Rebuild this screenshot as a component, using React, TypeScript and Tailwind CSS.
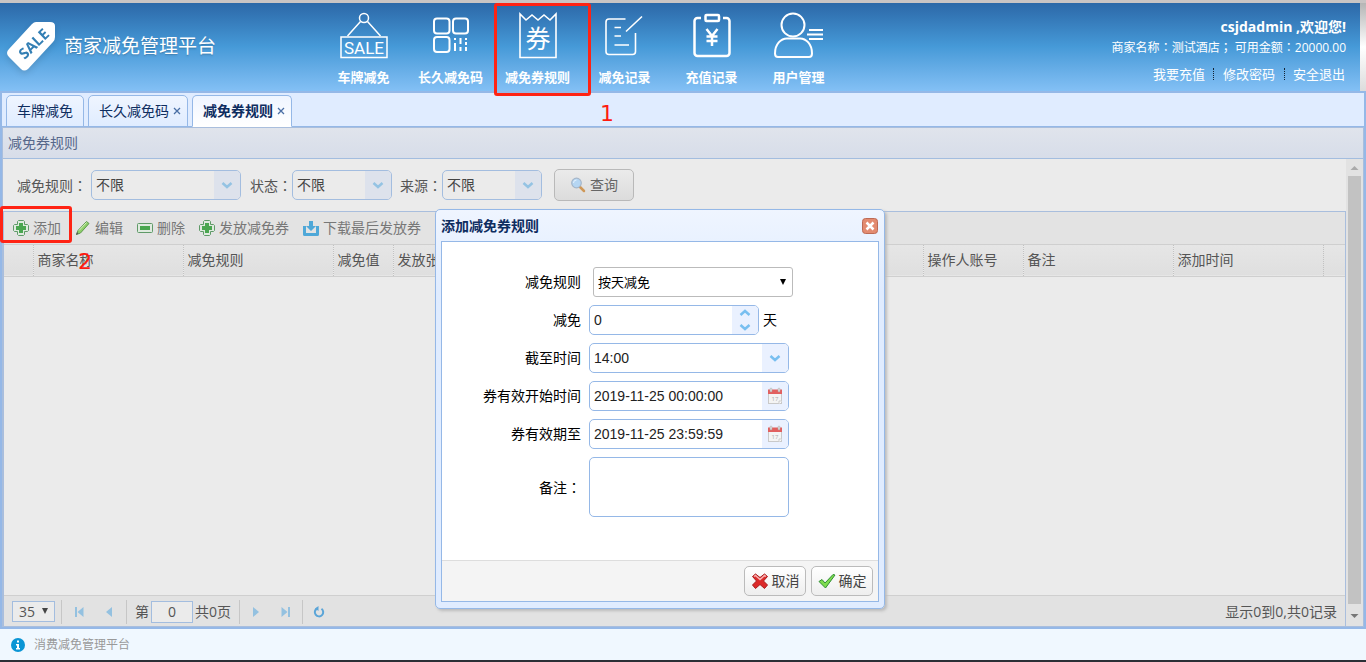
import { useState } from "react";
import type { ReactNode } from "react";

const NAV_ITEMS = [
  { id: "plate", label: "车牌减免" },
  { id: "code", label: "长久减免码" },
  { id: "rule", label: "减免券规则" },
  { id: "record", label: "减免记录" },
  { id: "recharge", label: "充值记录" },
  { id: "user", label: "用户管理" },
];

const TABS = [
  { label: "车牌减免", closable: false },
  { label: "长久减免码", closable: true },
  { label: "减免券规则", closable: true },
];

const COLUMNS = [
  { label: "", width: "w-[29px]" },
  { label: "商家名称", width: "w-[150px]" },
  { label: "减免规则", width: "w-[150px]" },
  { label: "减免值", width: "w-[60px]" },
  { label: "发放张数", width: "w-[530px]" },
  { label: "操作人账号", width: "w-[100px]" },
  { label: "备注", width: "w-[150px]" },
  { label: "添加时间", width: "w-[150px]" },
];

const NavIcon = ({ id }: { id: string }) => (
  <svg width="60" height="52" viewBox="0 0 60 52" fill="none" stroke="#fff" strokeWidth="2" aria-hidden="true">
    {id === "plate" && (
      <>
        <circle cx="30" cy="7" r="4.5" strokeWidth="1.5" />
        <path d="M13.5 25 26.5 10.5M46.5 25 33.5 10.5" strokeWidth="1.5" />
        <rect x="7" y="26" width="46" height="20.5" strokeWidth="1.5" />
        <text
          x="30"
          y="43"
          textAnchor="middle"
          fontSize="17"
          fontWeight="normal"
          fill="#fff"
          stroke="none"
          className="font-[Roboto]"
        >
          SALE
        </text>
      </>
    )}
    {id === "code" && (
      <>
        <rect x="13" y="7.5" width="15.5" height="15" rx="3" />
        <rect x="32" y="7.5" width="15" height="15" rx="3" />
        <rect x="13" y="26" width="15.5" height="15" rx="3" />
        <path d="M34 27v2M34 32v8M39.5 27v6M39.5 36v4M45 27v2M45 31v3M45 36v4" />
      </>
    )}
    {id === "rule" && (
      <>
        <path d="M12 3v43.5h36V3l-6 6-6-5-6 5-6-5-6 5z" strokeWidth="1.6" />
        <text x="30" y="37" textAnchor="middle" fontSize="25" fontWeight="normal" fill="#fff" stroke="none">
          券
        </text>
      </>
    )}
    {id === "record" && (
      <>
        <path d="M30.5 8H14a3 3 0 0 0-3 3v29.5a3 3 0 0 0 3 3h23.500a3 3 0 0 0 3-3V22" strokeWidth="1.6" />
        <path d="M31 20.5 47 5.500M19.500 16.500H26M19.500 25H26M19.500 34H34" strokeWidth="1.6" />
      </>
    )}
    {id === "recharge" && (
      <>
        <path
          d="M19 7h-3.500a3 3 0 0 0-3 3v32a3 3 0 0 0 3 3h29a3 3 0 0 0 3-3V10a3 3 0 0 0-3-3H41"
          strokeWidth="2.5"
        />
        <rect x="23.5" y="4" width="13.5" height="6" rx="1" strokeWidth="2.5" />
        <path d="m24.500 18 5.500 7 5.500-7M30 25v10M24.500 25.500h11M24.500 30h11" strokeWidth="2.5" />
      </>
    )}
    {id === "user" && (
      <>
        <circle cx="24" cy="14" r="11.5" />
        <path d="M6 42.500C6 33 12 27.500 18 27.500h13c6 0 12 5.500 12 15 0 2-1 3.500-3 3.500H9c-2 0-3-1.500-3-3.500z" />
        <path d="M40 19h14M38 23.500h16M40 28h14" />
      </>
    )}
  </svg>
);

const AddIcon = () => (
  <svg width="16" height="16" viewBox="0 0 16 16" aria-hidden="true">
    <path
      d="M5.500.500h5l1 1v3h3l1 1v5l-1 1h-3v3l-1 1h-5l-1-1v-3h-3l-1-1v-5l1-1h3v-3z"
      fill="#dfeadf"
      stroke="#5f9a68"
    />
    <path d="M6 3h4v3h3v4h-3v3H6v-3H3V6h3z" fill="#4aa650" />
  </svg>
);

const PencilIcon = () => (
  <svg width="16" height="16" viewBox="0 0 16 16" aria-hidden="true">
    <path d="m1.500 14.500 1.500-4 8.500-9 2.500 2-8.500 9.500z" fill="#8fcf6b" stroke="#5d9a4d" />
    <path d="m4 10.500 7.500-8" stroke="#d5efbd" />
    <path d="m1 15 1-3 1.500 1.500z" fill="#555" />
  </svg>
);

const RemoveIcon = () => (
  <svg width="16" height="16" viewBox="0 0 16 16" aria-hidden="true">
    <rect x=".5" y="3.5" width="15" height="9" rx="1" fill="#dfeadf" stroke="#5f9a68" />
    <rect x="3" y="6" width="10" height="4" fill="#4aa650" />
  </svg>
);

const DownloadIcon = () => (
  <svg width="16" height="16" viewBox="0 0 16 16" fill="#4fa8d8" aria-hidden="true">
    <path d="M0 6h3v7h10V6h3v8.500q0 1.500-1.500 1.500h-13Q0 16 0 14.500z" />
    <path d="M6 1h4v5h3l-5 5-5-5h3z" />
  </svg>
);

const SearchIcon = () => (
  <svg width="16" height="16" viewBox="0 0 16 16" aria-hidden="true">
    <path d="m9.500 9.500 4.500 4.500" stroke="#cf9858" strokeWidth="2.5" strokeLinecap="round" />
    <circle cx="6.5" cy="6" r="4.8" fill="#b5d6f3" stroke="#a5b6c9" strokeWidth="1.2" />
    <path d="M3.500 6a3 3 0 0 1 3-3" fill="none" stroke="#e6f3ff" />
  </svg>
);

const CalendarIcon = () => (
  <svg width="16" height="18" viewBox="0 0 16 18" aria-hidden="true">
    <rect x="1.5" y="3.5" width="13" height="13" fill="#f4f4f4" stroke="#c9c9c9" />
    <path d="M1 2.500h14V7H1z" fill="#e2605f" />
    <rect x="3" y="1" width="2" height="4" rx="1" fill="#ddd" stroke="#aaa" strokeWidth=".5" />
    <rect x="11" y="1" width="2" height="4" rx="1" fill="#ddd" stroke="#aaa" strokeWidth=".5" />
    <text x="8" y="14" textAnchor="middle" fontSize="6" fill="#aaa">
      17
    </text>
    <path d="M12 17v-3h3" fill="#fff" stroke="#ccc" />
  </svg>
);

const CancelIcon = () => (
  <svg width="18" height="16" viewBox="0 0 18 16" aria-hidden="true">
    <path
      d="m1.500 3.500 3-2.500L9 4.500 13.500 1l3 2.500L12.500 8l4 4-3 3.500L9 11.500l-4.500 4-3-3.500 4-4z"
      fill="#dc2a2a"
      stroke="#a81c1c"
      strokeLinejoin="round"
    />
    <path d="m3 3.500 1.500-1L9 6.500l4.500-4 1.500 1" fill="none" stroke="#f9b3b3" strokeWidth="1.5" />
  </svg>
);

const OkIcon = () => (
  <svg width="18" height="16" viewBox="0 0 18 16" aria-hidden="true">
    <path d="m1 8.500 3-2 3 3.500L15 1.500l2 .5L7.500 15z" fill="#7edb4e" stroke="#2f8f35" strokeLinejoin="round" />
  </svg>
);

const Chevron = ({ up = false }: { up?: boolean }) => (
  <svg width="12" height="8" viewBox="0 0 12 8" fill="none" strokeWidth="2.5" aria-hidden="true">
    <path d={up ? "M1.500 6 6 2l4.500 4" : "M1.500 2 6 6l4.500-4"} stroke="currentColor" />
  </svg>
);

// The SC face sets full-width punctuation at the left, the TC one centres it
const Mark = ({ children }: { children: string }) => <span className="font-['Noto_Sans_CJK_TC']">{children}</span>;

const FilterSelect = ({ id, label, width }: { id: string; label: string; width: string }) => (
  <>
    <label htmlFor={id}>
      {label}
      <Mark>：</Mark>
    </label>
    <div className={`relative h-[30px] overflow-hidden rounded-[5px] border border-[#a3bddf] ${width}`}>
      <select id={id} className="h-full w-full appearance-none bg-transparent px-1 text-sm text-[#444] outline-none">
        <option>不限</option>
      </select>
      <span className="pointer-events-none absolute inset-y-0 right-0 flex w-[26px] items-center justify-center bg-[#dde2ec] text-[#94c3e3]">
        <Chevron />
      </span>
    </div>
  </>
);

const ToolButton = ({ icon, label, onClick }: { icon: ReactNode; label: string; onClick?: () => void }) => (
  <button type="button" className="flex items-center gap-1 text-[#777]" onClick={onClick}>
    {icon}
    {label}
  </button>
);

const PageButton = ({ label, path }: { label: string; path: string }) => (
  <button type="button" aria-label={label} className="flex w-[30px] justify-center text-[#94c1e0]">
    <svg width="12" height="12" viewBox="0 0 12 12" fill="currentColor" aria-hidden="true">
      <path d={path} />
    </svg>
  </button>
);

const Separator = () => <span className="h-6 w-px bg-[#c6c6c6]" />;

const FormRow = ({ id, label, children }: { id: string; label: ReactNode; children: ReactNode }) => (
  <div className="flex items-center gap-2">
    <label htmlFor={id} className="w-[139px] text-right">
      {label}
    </label>
    {children}
  </div>
);

const FIELD = "flex h-[30px] overflow-hidden rounded-[5px] border border-[#95b8e7] bg-white";
const FIELD_INPUT = "min-w-0 flex-1 px-1 font-[Liberation_Sans] text-sm text-[#222] outline-none";
const FIELD_ADDON = "flex w-[26px] flex-col items-center justify-center bg-[#eaf1ff] text-[#78bff0]";
const DIALOG_BUTTON =
  "flex h-[30px] w-[62px] items-center justify-center gap-[3px] rounded-[5px] border border-[#bbb] bg-linear-to-b from-white to-[#eee] text-[#444]";

const RuleDialog = ({ onClose }: { onClose: () => void }) => {
  const [amount, setAmount] = useState("0");
  const [start, setStart] = useState("2019-11-25 00:00:00");
  const [end, setEnd] = useState("2019-11-25 23:59:59");

  return (
    <div
      role="dialog"
      aria-label="添加减免券规则"
      className="absolute top-[209px] left-[435px] w-[450px] rounded-[5px] border border-[#95b8e7] bg-linear-to-b from-[#eff5ff] to-[#e0ecff] to-20% px-[5px] pb-[6px] shadow-[2px_2px_3px_#bbb]"
    >
      <div className="flex h-[31px] items-center justify-between pr-px">
        <h2 className="font-bold text-[#0e2d5f]">添加减免券规则</h2>
        <button type="button" aria-label="关闭" onClick={onClose}>
          <svg width="16" height="16" viewBox="0 0 16 16">
            <rect x=".5" y=".5" width="15" height="15" rx="3" fill="#e38b70" stroke="#bd6a54" />
            <path d="m4.500 4.500 7 7m0-7-7 7" stroke="#fff" strokeWidth="2.5" />
          </svg>
        </button>
      </div>

      <form className="border border-[#95b8e7] bg-white text-black" onSubmit={(e) => e.preventDefault()}>
        <div className="flex flex-col gap-2 pt-[25px] pb-[43px]">
          <FormRow id="type" label="减免规则">
            <div className="relative ml-1 h-[30px] w-[200px] rounded-[3px] border border-[#bbb]">
              <select id="type" className="h-full w-full appearance-none px-1 text-[13px] outline-none">
                <option>按天减免</option>
              </select>
              <svg
                width="8"
                height="8"
                viewBox="0 0 8 8"
                className="pointer-events-none absolute top-[10px] right-[5px]"
                aria-hidden="true"
              >
                <path d="M1 1h6L4 7z" />
              </svg>
            </div>
          </FormRow>
          <FormRow id="amount" label="减免">
            <div className="flex items-center gap-1">
              <div className={`${FIELD} w-[170px]`}>
                <input id="amount" className={FIELD_INPUT} value={amount} onChange={(e) => setAmount(e.target.value)} />
                <span className={`${FIELD_ADDON} gap-[6px]`}>
                  <Chevron up />
                  <Chevron />
                </span>
              </div>
              天
            </div>
          </FormRow>
          <FormRow id="until" label="截至时间">
            <div className={`${FIELD} relative w-[200px]`}>
              <select
                id="until"
                className="w-full appearance-none px-1 font-[Liberation_Sans] text-sm text-[#222] outline-none"
              >
                <option>14:00</option>
              </select>
              <span className={`${FIELD_ADDON} pointer-events-none absolute inset-y-0 right-0`}>
                <Chevron />
              </span>
            </div>
          </FormRow>
          <FormRow id="start" label="券有效开始时间">
            <div className={`${FIELD} w-[200px]`}>
              <input id="start" className={FIELD_INPUT} value={start} onChange={(e) => setStart(e.target.value)} />
              <span className={FIELD_ADDON}>
                <CalendarIcon />
              </span>
            </div>
          </FormRow>
          <FormRow id="end" label="券有效期至">
            <div className={`${FIELD} w-[200px]`}>
              <input id="end" className={FIELD_INPUT} value={end} onChange={(e) => setEnd(e.target.value)} />
              <span className={FIELD_ADDON}>
                <CalendarIcon />
              </span>
            </div>
          </FormRow>
          <FormRow
            id="remark"
            label={
              <>
                备注<Mark>：</Mark>
              </>
            }
          >
            <textarea
              id="remark"
              className="h-[60px] w-[200px] resize-none rounded-[5px] border border-[#95b8e7] p-1 outline-none"
            />
          </FormRow>
        </div>

        <div className="flex justify-end gap-[5px] border-t border-[#ddd] bg-[#f4f4f4] p-[5px]">
          <button type="button" className={DIALOG_BUTTON} onClick={onClose}>
            <CancelIcon />
            取消
          </button>
          <button type="submit" className={DIALOG_BUTTON}>
            <OkIcon />
            确定
          </button>
        </div>
      </form>
    </div>
  );
};

const Header = () => (
  <header className="flex border-t-3 border-[#c9c4c4] bg-linear-to-b from-[#b5b5b5] via-white to-[#dcdcdc] pr-[6px]">
    <div className="flex h-[88px] flex-1 bg-linear-to-b from-[#2c68a8] via-[#469ad8] to-[#83c0f5] pr-[14px] text-white">
      <div className="flex w-80 items-center pl-1">
        <svg width="60" height="60" viewBox="0 0 60 60" className="drop-shadow-md" aria-hidden="true">
          <path
            d="M32 5h14q5 0 5 4v11q0 3-2 5L24 52q-4 3-7 0L5 40q-4-4 0-8L28 7q2-2 4-2z"
            fill="#fff"
          />
          <text
            y="5"
            textAnchor="middle"
            fontSize="15"
            fontWeight="bold"
            fill="#337fb4"
            transform="translate(30 27) rotate(-44)"
            className="font-[Open_Sans]"
          >
            SALE
          </text>
        </svg>
        <h1 className="text-[19px] text-shadow-sm">商家减免管理平台</h1>
      </div>

      <nav className="flex">
        {NAV_ITEMS.map(({ id, label }) => (
          <a
            key={id}
            href={`#${id}`}
            className="relative flex w-[87px] flex-col items-center pt-2 text-[13px] leading-5 font-bold"
          >
            <NavIcon id={id} />
            <span className="mt-1">{label}</span>
            {id === "rule" && (
              <>
                <span className="absolute top-0 left-0 h-[93px] w-[97px] rounded-[3px] border-3 border-[#ff2314]" />
                <span className="absolute top-[101px] left-[106px] font-[DejaVu_Sans] text-[22px] leading-5 font-normal text-[#ff1a10]">
                  1
                </span>
              </>
            )}
          </a>
        ))}
      </nav>

      <div className="ml-auto flex flex-col items-end pt-[14px] whitespace-nowrap">
        <p className="text-sm leading-5 font-bold">csjdadmin ,欢迎您!</p>
        <p className="text-xs leading-5">
          商家名称<Mark>：</Mark>测试酒店<Mark>；</Mark> 可用金额<Mark>：</Mark>20000.00
        </p>
        <ul className="flex items-center pt-[6px] pr-px text-[13px] leading-5">
          <li className="pr-2">
            <a href="#recharge">我要充值</a>
          </li>
          <li className="flex items-center">
            <span className="h-3 border-l border-dotted border-[#123]" />
            <a href="#password" className="px-[9px]">
              修改密码
            </a>
            <span className="h-3 border-l border-dotted border-[#123]" />
          </li>
          <li className="pl-2">
            <a href="#logout">安全退出</a>
          </li>
        </ul>
      </div>
    </div>
  </header>
);

export default function App() {
  const [activeTab, setActiveTab] = useState(2);
  const [dialogOpen, setDialogOpen] = useState(true);
  const [page, setPage] = useState("0");

  return (
    <div className="relative flex min-h-screen flex-col bg-white font-['Open_Sans','Noto_Sans_CJK_SC',sans-serif] text-sm">
      <Header />

      <main className="flex flex-1 flex-col border-2 border-[#95b8e7] bg-[#e0ecff]">
        <div className="flex h-[34px] items-end gap-1 border-b border-[#95b8e7] pl-1">
          {TABS.map((tab, i) => (
            <div
              key={tab.label}
              className={`-mb-px flex h-8 items-center gap-1 rounded-t-[5px] border border-[#95b8e7] text-[#0e2d5f] ${
                tab.closable ? "pr-[6px] pl-[10px]" : "px-[10px]"
              } ${
                i === activeTab
                  ? "border-b-white bg-linear-to-b from-[#eff5ff] to-white font-bold"
                  : "bg-linear-to-b from-[#eff5ff] to-[#e0ecff]"
              }`}
            >
              <button type="button" onClick={() => setActiveTab(i)}>
                {tab.label}
              </button>
              {tab.closable && (
                <button type="button" aria-label="关闭标签" className="text-[#4a6fa5]">
                  <svg width="8" height="8" viewBox="0 0 8 8" stroke="currentColor" strokeWidth="1.3" aria-hidden="true">
                    <path d="m1 1 6 6m0-6L1 7" />
                  </svg>
                </button>
              )}
            </div>
          ))}
        </div>

        <section className="flex flex-1 flex-col border border-[#a9bedd] bg-[#ebebeb]">
          <h2 className="flex h-[31px] items-center border-b border-[#a3bddf] bg-linear-to-b from-[#e0e4ec] to-[#d7dde9] pl-[5px] text-[#56678a]">
            减免券规则
          </h2>

          <div className="flex flex-1">
            <div className="flex flex-1 flex-col">
              <form className="flex h-[52px] items-center text-[#555]" onSubmit={(e) => e.preventDefault()}>
                <div className="flex items-center gap-1 pl-[14px]">
                  <FilterSelect id="rule-filter" label="减免规则" width="w-[150px]" />
                </div>
                <div className="flex items-center pl-[9px]">
                  <FilterSelect id="state-filter" label="状态" width="w-[100px]" />
                </div>
                <div className="flex items-center pl-2">
                  <FilterSelect id="source-filter" label="来源" width="w-[100px]" />
                </div>
                <button
                  type="submit"
                  className="ml-3 flex h-8 w-20 items-center justify-center gap-1 rounded-[5px] border border-[#b9b9b9] bg-linear-to-b from-[#ebebeb] to-[#dcdcdc] text-[#666]"
                >
                  <SearchIcon />
                  查询
                </button>
              </form>

              <div className="flex flex-1 flex-col border border-b-0 border-[#a9bedd]">
                <div className="relative flex h-[33px] items-center gap-[14px] border-b border-[#cfcfcf] bg-[#e3e3e3] pl-[9px]">
                  <ToolButton icon={<AddIcon />} label="添加" onClick={() => setDialogOpen(true)} />
                  <ToolButton icon={<PencilIcon />} label="编辑" />
                  <ToolButton icon={<RemoveIcon />} label="删除" />
                  <ToolButton icon={<AddIcon />} label="发放减免券" />
                  <ToolButton icon={<DownloadIcon />} label="下载最后发放券" />
                  <span className="absolute -top-[6px] -left-1 h-[37px] w-[72px] rounded-[3px] border-3 border-[#ff2314]" />
                  <span className="absolute top-10 left-[74px] font-[DejaVu_Sans] text-[22px] leading-5 text-[#ff1a10]">
                    2
                  </span>
                </div>

                <table className="w-full table-fixed">
                  <thead>
                    <tr className="h-[31px] border-b border-[#cfcfcf] bg-linear-to-b from-[#e6e6e6] to-[#dfdfdf] text-[#555]">
                      {COLUMNS.map((col) => (
                        <th
                          key={col.label}
                          className={`${col.width} overflow-hidden border-r border-dotted border-r-[#c2c2c2] px-1 text-left font-normal whitespace-nowrap`}
                        >
                          {col.label}
                        </th>
                      ))}
                      <th />
                    </tr>
                  </thead>
                  <tbody />
                </table>

                <div className="mt-auto flex h-[31px] items-center border-t border-[#cfcfcf] bg-[#e2e2e2] px-2 pt-px text-[#555]">
                  <div className="relative mr-[6px] h-[21px] w-[43px] border border-[#a3bddf] bg-[#ebebeb]">
                    <select
                      aria-label="每页条数"
                      className="h-full w-full appearance-none pl-[6px] text-sm leading-[19px] outline-none"
                    >
                      <option>35</option>
                    </select>
                    <svg
                      width="8"
                      height="8"
                      viewBox="0 0 8 8"
                      fill="#444"
                      className="pointer-events-none absolute top-[5px] right-[5px]"
                      aria-hidden="true"
                    >
                      <path d="M1 1h6L4 7z" />
                    </svg>
                  </div>
                  <Separator />
                  <div className="flex px-[2px]">
                    <PageButton label="首页" path="M2 1h2v10H2zM10.500 1v10L4.500 6z" />
                    <PageButton label="上一页" path="M9 1v10L3 6z" />
                  </div>
                  <Separator />
                  <div className="flex items-center gap-[2px] px-2">
                    <label htmlFor="page">第</label>
                    <input
                      id="page"
                      className="h-[22px] w-[42px] border border-[#a3bddf] bg-[#ebebeb] text-center text-sm outline-none"
                      value={page}
                      onChange={(e) => setPage(e.target.value)}
                    />
                    <span>共0页</span>
                  </div>
                  <Separator />
                  <div className="flex px-px">
                    <PageButton label="下一页" path="M3 1v10l6-5z" />
                    <PageButton label="尾页" path="M8 1h2v10H8zM1.500 1v10l6-5z" />
                  </div>
                  <Separator />
                  <button type="button" aria-label="刷新" className="flex w-8 justify-center">
                    <svg width="12" height="12" viewBox="0 0 12 12" aria-hidden="true">
                      <path d="M4 2.500a4.200 4.200 0 1 0 4.500.3" fill="none" stroke="#5ba5d8" strokeWidth="2" />
                      <path d="M5.500 0v5L2 2.500z" fill="#5ba5d8" />
                    </svg>
                  </button>
                  <span className="ml-auto">显示0到0,共0记录</span>
                </div>
              </div>
            </div>

            <div className="flex w-[17px] flex-col items-center bg-[#e2e2e2]" aria-hidden="true">
              <svg width="17" height="17" viewBox="0 0 17 17" fill="#aaa">
                <path d="M4.500 11h8l-4-4z" />
              </svg>
              <span className="w-[13px] flex-1 bg-[#c2c2c2]" />
              <svg width="17" height="22" viewBox="0 0 17 22" fill="#777">
                <path d="M4.500 10h8l-4 4z" />
              </svg>
            </div>
          </div>
        </section>
      </main>

      <footer className="flex h-[33px] items-center gap-[9px] border-b-2 border-[#2b2f36] bg-[#f0f8ff] pl-[11px] text-xs text-[#999]">
        <svg width="14" height="14" viewBox="0 0 14 14" aria-hidden="true">
          <circle cx="7" cy="7" r="7" fill="#0a95d5" />
          <path d="M6 2.500h2v2H6zM5 6h3v4h1v1.500H5V10h1V7.500H5z" fill="#fff" />
        </svg>
        消费减免管理平台
      </footer>

      {dialogOpen && <RuleDialog onClose={() => setDialogOpen(false)} />}
    </div>
  );
}
